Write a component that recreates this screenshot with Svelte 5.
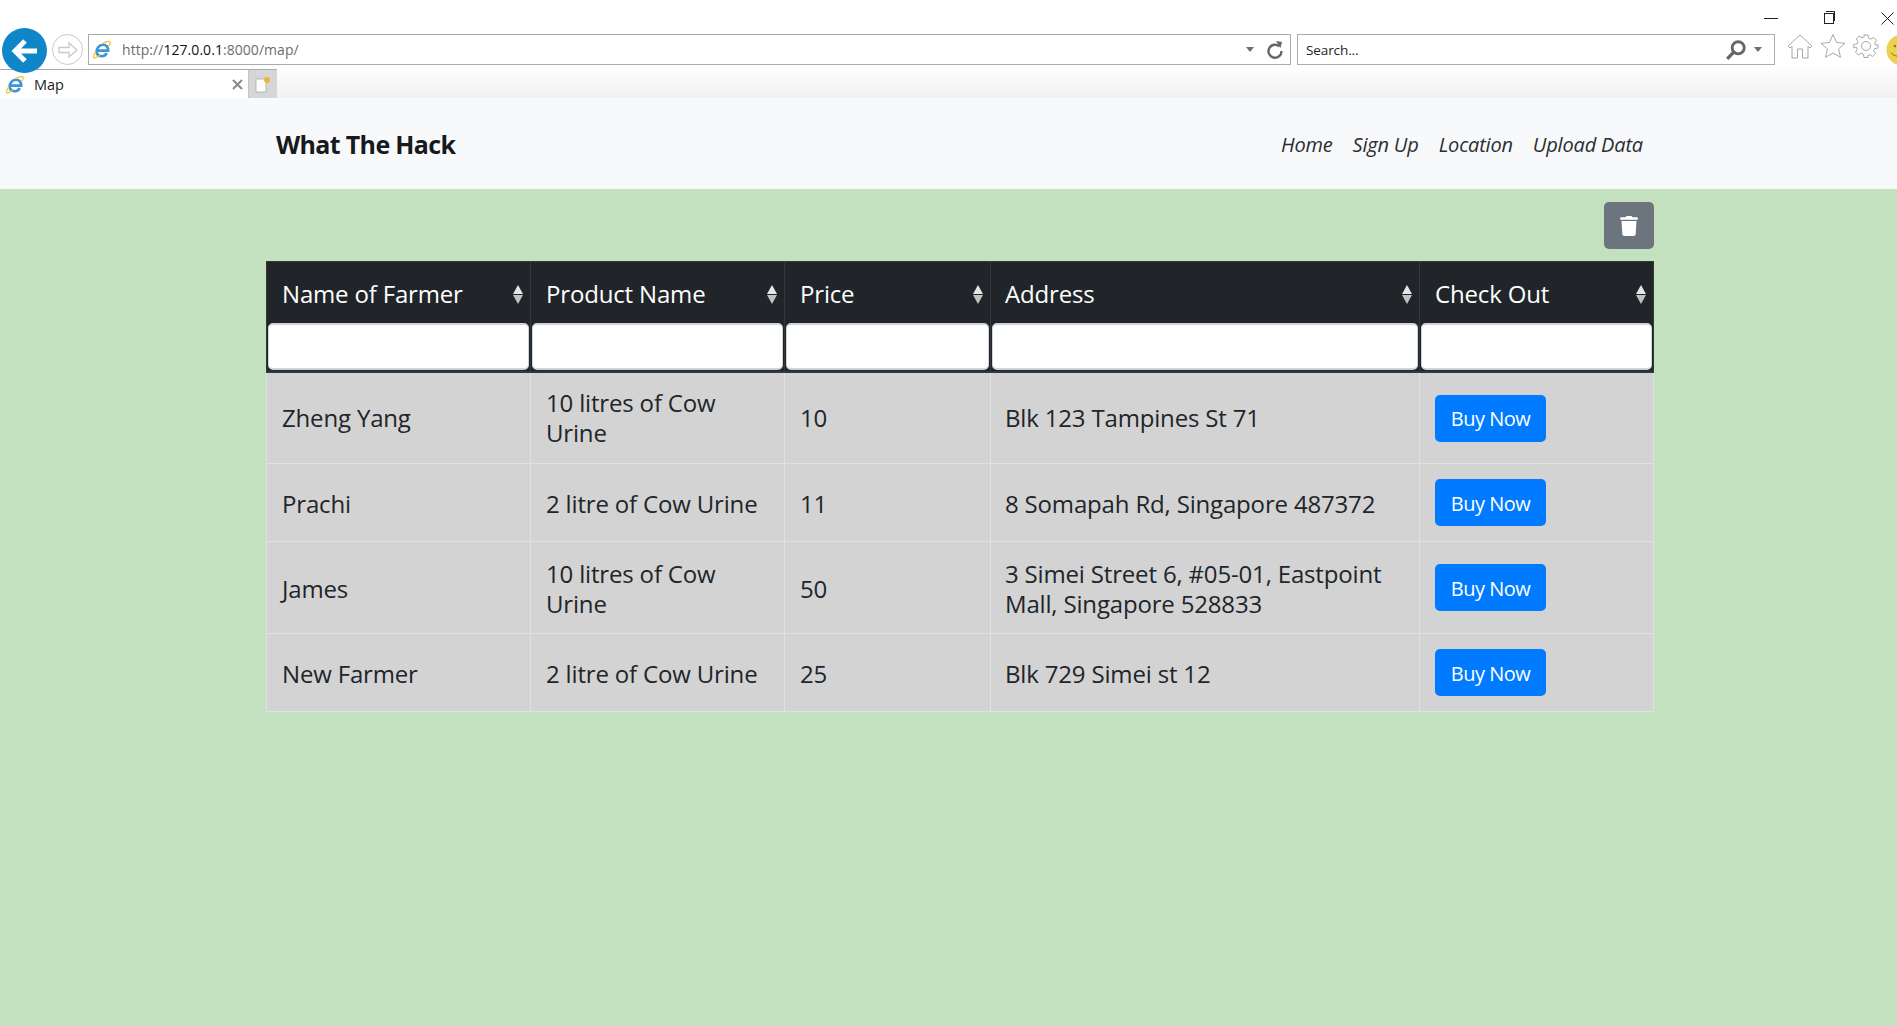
<script>
  const rows = [
    { farmer: 'Zheng Yang', product: '10 litres of Cow Urine', price: '10', address: 'Blk 123 Tampines St 71' },
    { farmer: 'Prachi', product: '2 litre of Cow Urine', price: '11', address: '8 Somapah Rd, Singapore 487372' },
    { farmer: 'James', product: '10 litres of Cow Urine', price: '50', address: '3 Simei Street 6, #05-01, Eastpoint Mall, Singapore 528833' },
    { farmer: 'New Farmer', product: '2 litre of Cow Urine', price: '25', address: 'Blk 729 Simei st 12' }
  ];
  const cols = ['Name of Farmer', 'Product Name', 'Price', 'Address', 'Check Out'];
</script>

{#snippet ie(size)}
  <svg class="ie" width={size} height={size} viewBox="0 0 24 24" fill="none">
    <path d="M6 16.500C5 11 9 6 14 6c4 0 6.600 3 6.400 7.500H7.500M18.500 16.500c-1 2.600-3.400 4-6 4-3.200 0-5.800-2-6.500-4" stroke="#3c94d6" stroke-width="3.400"/>
    <path d="M5 14C2.500 18 1 21 2.500 22.300 4 23.500 7.500 21 10 19M13 4.500C17 2.500 21 1 22.500 2.200 23.500 3.200 22.800 5.500 21 8" stroke="#f0c528" stroke-width="1.600"/>
  </svg>
{/snippet}

<div class="browser">
  <div class="winbar">
    <span class="win min"></span>
    <span class="win restore"><i></i></span>
    <svg class="win close" width="13" height="13" viewBox="0 0 13 13"><path d="M.5.500l12 12M12.500.500l-12 12" stroke="#222" stroke-width="1"/></svg>
  </div>
  <div class="toolbar">
    <div class="back">
      <svg width="30" height="30" viewBox="0 0 30 30" fill="none"><path d="M27 15H6M15 5 5 15l10 10" stroke="#fff" stroke-width="5"/></svg>
    </div>
    <div class="fwd">
      <svg width="22" height="22" viewBox="0 0 22 22" fill="none"><path d="M2 8.500h10V4l8 7-8 7v-4.500H2z" stroke="#c9c9c9" stroke-width="1.300"/></svg>
    </div>
    <div class="field address">
      {@render ie(19)}
      <span class="url">http://<b>127.0.0.1</b>:8000/map/</span>
      <span class="caret"></span>
      <svg class="reload" width="18" height="20" viewBox="0 0 18 20" fill="none"><path d="M13.500 6.500A6.500 6.500 0 1 0 15.500 11" stroke="#666" stroke-width="2.400"/><path d="M10 1l6 1-1.500 6z" fill="#666"/></svg>
    </div>
    <div class="field search">
      <span class="stext">Search...</span>
      <svg width="22" height="22" viewBox="0 0 20 20" fill="none"><circle cx="12" cy="8" r="5.500" stroke="#666" stroke-width="2.600"/><path d="M8 12l-6 6" stroke="#666" stroke-width="3"/></svg>
      <span class="caret"></span>
    </div>
    <div class="tools">
      <svg width="26" height="26" viewBox="0 0 26 26" fill="none" stroke="#a8a8a8" stroke-width="1"><path d="M1 13 13 2l12 11-2 2-2-1.800V25h-5.500v-9h-5v9H5V13.200L3 15z"/></svg>
      <svg width="26" height="26" viewBox="0 0 26 26" fill="none" stroke="#a8a8a8" stroke-width="1"><path d="M13 1.500l3.500 8 8.500.8-6.400 5.600 1.900 8.400L13 20l-7.500 4.300 1.900-8.400L1 10.300l8.500-.8z"/></svg>
      <svg width="26" height="26" viewBox="0 0 26 26" fill="none" stroke="#a8a8a8" stroke-width="1"><circle cx="13" cy="13" r="4.500"/><path d="M11 2h4l.6 3.200 2.300 1 2.700-1.800 2.900 2.900-1.800 2.700 1 2.300L25 11.500v3.500l-3.300.6-1 2.300 1.800 2.700-2.900 2.900-2.700-1.800-2.300 1L15 24.500h-4l-.6-3.300-2.300-1-2.700 1.800-2.900-2.900 1.800-2.700-1-2.300L0.800 15v-3.500l3.300-.6 1-2.300L3.300 5.900l2.900-2.900 2.700 1.800 2.300-1z"/></svg>
      <svg class="smile" width="26" height="34" viewBox="0 0 26 34"><circle cx="16" cy="17" r="15.500" fill="#ecd14c"/><circle cx="9" cy="13" r="1.300" fill="#8a7a20"/><path d="M5 20q6 6 13 1" stroke="#8a7a20" fill="none"/></svg>
    </div>
  </div>
  <div class="tabs">
    <div class="tab">
      {@render ie(19)}
      <span class="tabname">Map</span>
      <svg width="11" height="11" viewBox="0 0 11 11"><path d="M1 1l9 9M10 1l-9 9" stroke="#8a8a8a" stroke-width="2"/></svg>
    </div>
    <div class="newtab">
      <svg width="16" height="17" viewBox="0 0 16 17"><path d="M1 3h10v13H1z" fill="#fff" stroke="#a8a8a8" stroke-width=".8"/><circle cx="12" cy="4" r="3" fill="#f2b13c"/></svg>
    </div>
  </div>
</div>

<nav class="navbar">
  <span class="brand">What The Hack</span>
  <ul class="links">
    <li>Home</li>
    <li>Sign Up</li>
    <li>Location</li>
    <li>Upload Data</li>
  </ul>
</nav>

<main class="content">
  <div class="actions">
    <button class="trash" aria-label="Delete">
      <svg width="18" height="20" viewBox="0 0 448 512"><path fill="#fff" d="M432 32H312l-9.400-18.700A24 24 0 0 0 281.100 0H166.800a23.720 23.720 0 0 0-21.400 13.300L136 32H16A16 16 0 0 0 0 48v32a16 16 0 0 0 16 16h416a16 16 0 0 0 16-16V48a16 16 0 0 0-16-16zM53.200 467a48 48 0 0 0 47.900 45h245.800a48 48 0 0 0 47.900-45L416 128H32z"/></svg>
    </button>
  </div>
  <table>
    <colgroup>
      <col class="c1" /><col class="c2" /><col class="c3" /><col class="c4" /><col class="c5" />
    </colgroup>
    <thead>
      <tr class="heads">
        {#each cols as c}
          <th>
            {c}
            <span class="sort"><i class="up"></i><i class="down"></i></span>
          </th>
        {/each}
      </tr>
      <tr class="filters">
        {#each cols as c}
          <th><input type="text" aria-label={c} /></th>
        {/each}
      </tr>
    </thead>
    <tbody>
      {#each rows as r}
        <tr>
          <td>{r.farmer}</td>
          <td>{r.product}</td>
          <td>{r.price}</td>
          <td>{r.address}</td>
          <td class="action"><button class="buy">Buy Now</button></td>
        </tr>
      {/each}
    </tbody>
  </table>
</main>

<style>
  :global(body) {
    margin: 0;
    background: #c3e1be;
    overflow: hidden;
    font-family: "Open Sans", "Noto Sans", sans-serif;
    color: #212529;
  }
  .browser {
    height: 98px;
    background: linear-gradient(#fff 66px, #f0f0f0 98px);
    position: relative;
  }
  .winbar { height: 34px; position: relative; }
  .win { position: absolute; }
  .min { left: 1764px; top: 18px; width: 14px; height: 1px; background: #222; }
  .restore { left: 1824px; top: 13px; width: 8px; height: 9px; border: 1px solid #222; background: #fff; }
  .restore i { position: absolute; left: 1px; top: -3px; width: 8px; height: 9px; border: 1px solid #222; border-left: 0; border-bottom: 0; }
  .close { left: 1881px; top: 12px; }

  .toolbar { display: flex; align-items: center; height: 31px; padding-left: 2px; }
  .back {
    width: 45px; height: 45px; border-radius: 50%;
    background: #0e86c8;
    display: flex; align-items: center; justify-content: center;
    flex: none; position: relative; z-index: 2;
    margin-top: 2px;
  }
  .fwd {
    width: 31px; height: 31px; border-radius: 50%;
    border: 1px solid #c9c9c9; box-sizing: border-box;
    margin-left: 5px;
    display: flex; align-items: center; justify-content: center;
    flex: none;
  }
  .field {
    height: 31px; box-sizing: border-box; background: #fff;
    border: 1px solid #ababab;
    display: flex; align-items: center;
    font-size: 14px; flex: none;
  }
  .address { width: 1203px; margin-left: 5px; padding: 0 3px; }
  .url { margin-left: 11px; color: #6d6d6d; flex: 1; letter-spacing: .05px; }
  .url b { font-weight: 400; color: #111; }
  .caret { width: 0; height: 0; border: 4.500px solid transparent; border-top: 5px solid #6d6d6d; border-bottom: 0; }
  .address .caret { margin-right: 4px; }
  .reload { margin: 0 3px 0 8px; }
  .search { width: 478px; margin-left: 6px; padding: 0 12px 0 8px; }
  .stext { flex: 1; color: #222; font-size: 13.500px; letter-spacing: -.1px; }
  .search .caret { margin-left: 7px; }
  .tools { display: flex; gap: 7px; margin-left: 12px; flex: none; }
  .tools svg { flex: none; }

  .tabs { display: flex; height: 33px; box-sizing: border-box; padding-top: 4px; }
  .tab {
    width: 249px; box-sizing: border-box;
    background: #fff;
    border-top: 1px solid #ababab;
    border-right: 1px solid #c4c4c4;
    display: flex; align-items: center;
    padding: 0 4px 0 5px;
  }
  .tabname { margin-left: 10px; flex: 1; font-size: 14.500px; color: #222; }
  .tab svg:last-child { margin-right: 1px; }
  .newtab {
    width: 28px; background: #d6d6d6;
    border-top: 1px solid #ababab;
    display: flex; align-items: center; justify-content: center;
  }

  .navbar {
    height: 91px; box-sizing: border-box;
    background: #f8f9fa;
    padding: 0 0 0 276px;
    display: flex; align-items: center;
  }
  .brand { font-size: 25px; font-weight: 700; color: #17191c; width: 1005px; flex: none; letter-spacing: -.65px; }
  .links {
    list-style: none; margin: 0; padding: 2px 0 0;
    display: flex; gap: 20px;
    font-size: 20px; font-style: italic; color: #2a2d31;
    letter-spacing: -.18px;
  }

  .content { padding: 13px 0 0 266px; width: 1388px; }
  .actions { display: flex; justify-content: flex-end; margin-bottom: 12px; }
  .trash {
    width: 50px; height: 47px; border: 0; border-radius: 5px;
    background: #6c757d; padding: 0;
    display: flex; align-items: center; justify-content: center;
  }
  table {
    border-collapse: collapse; table-layout: fixed; width: 1387px;
    font-size: 24px; line-height: 30px;
    letter-spacing: -.17px;
  }
  .c1 { width: 264px; } .c2 { width: 254px; } .c3 { width: 206px; } .c4 { width: 429px; } .c5 { width: 234px; }
  th, td { padding: 16px 15px 14px; text-align: left; vertical-align: middle; box-sizing: border-box; }
  th:nth-child(4), td:nth-child(4) { padding-left: 14px; }
  th { background: #212529; color: #fff; font-weight: 400; border: 1px solid #32383e; position: relative; }
  .heads th { padding-top: 17px; border-bottom: 0; }
  .filters th { padding: 0 1px 1px; border-top: 0; border-bottom: 2px solid #32383e; height: 48px; }
  input {
    display: block; width: 100%; height: 47px; box-sizing: border-box;
    border: 1px solid #ced4da; border-top-width: 2px; border-bottom-width: 2px; border-radius: 5px; background: #fff; padding: 0; margin: 0;
  }
  .sort { position: absolute; right: 7px; top: 23px; display: flex; flex-direction: column; gap: 1px; }
  .sort i { width: 0; height: 0; border-left: 5px solid transparent; border-right: 5px solid transparent; display: block; }
  .up { border-bottom: 9px solid #e6e6e6; }
  .down { border-top: 9px solid #bfc1c3; }
  td { background: #d3d3d3; border: 1px solid #dee2e6; color: #212529; }
  tbody tr:nth-child(1) td:not(.action) { padding-top: 15px; padding-bottom: 15px; }
  tbody tr:nth-child(3) td { height: 92px; }
  tbody tr:nth-child(4) td { height: 78px; }
  td.action { padding: 15px; }
  .buy {
    display: block;
    width: 111px; height: 47px; padding: 2px 0 0; border: 0; border-radius: 5px;
    background: #007bff; color: #fff;
    font-family: inherit; font-size: 20px; line-height: 28px; letter-spacing: -.5px;
  }
</style>
